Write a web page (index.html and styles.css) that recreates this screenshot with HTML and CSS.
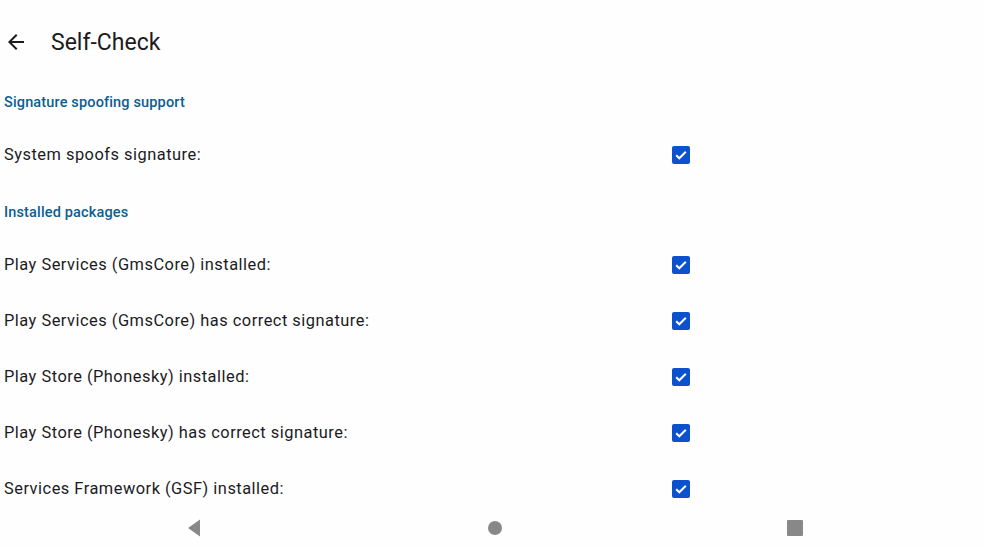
FILE: index.html
```html
<!DOCTYPE html>
<html lang="en">
<head>
<meta charset="utf-8">
<title>Self-Check</title>
<link rel="stylesheet" href="styles.css">
</head>
<body>
<div class="screen">
  <header class="topbar">
    <span class="back-icon">
      <svg width="24" height="24" viewBox="0 0 24 24"><path d="M20 11H7.83l5.59-5.59L12 4l-8 8 8 8 1.41-1.41L7.83 13H20v-2z" fill="#1c1b1f"/></svg>
    </span>
    <h1 class="title">Self-Check</h1>
  </header>

  <section class="section">
    <h2 class="section-title">Signature spoofing support</h2>
    <div class="row"><span class="label">System spoofs signature:</span><span class="checkbox"><svg width="18" height="18" viewBox="0 0 18 18"><path d="M4.2 9.2l3.1 3.1 6.5-6.5" fill="none" stroke="#fff" stroke-width="2"/></svg></span></div>
  </section>

  <section class="section">
    <h2 class="section-title">Installed packages</h2>
    <div class="row"><span class="label">Play Services (GmsCore) installed:</span><span class="checkbox"><svg width="18" height="18" viewBox="0 0 18 18"><path d="M4.2 9.2l3.1 3.1 6.5-6.5" fill="none" stroke="#fff" stroke-width="2"/></svg></span></div>
    <div class="row"><span class="label">Play Services (GmsCore) has correct signature:</span><span class="checkbox"><svg width="18" height="18" viewBox="0 0 18 18"><path d="M4.2 9.2l3.1 3.1 6.5-6.5" fill="none" stroke="#fff" stroke-width="2"/></svg></span></div>
    <div class="row"><span class="label">Play Store (Phonesky) installed:</span><span class="checkbox"><svg width="18" height="18" viewBox="0 0 18 18"><path d="M4.2 9.2l3.1 3.1 6.5-6.5" fill="none" stroke="#fff" stroke-width="2"/></svg></span></div>
    <div class="row"><span class="label">Play Store (Phonesky) has correct signature:</span><span class="checkbox"><svg width="18" height="18" viewBox="0 0 18 18"><path d="M4.2 9.2l3.1 3.1 6.5-6.5" fill="none" stroke="#fff" stroke-width="2"/></svg></span></div>
    <div class="row"><span class="label">Services Framework (GSF) installed:</span><span class="checkbox"><svg width="18" height="18" viewBox="0 0 18 18"><path d="M4.2 9.2l3.1 3.1 6.5-6.5" fill="none" stroke="#fff" stroke-width="2"/></svg></span></div>
  </section>
</div>

<nav class="navbar">
  <span class="nav-back"><svg width="14" height="18" viewBox="0 0 14 18"><path d="M13 0.5V17.5L1 9z" fill="#888"/></svg></span>
  <span class="nav-home"></span>
  <span class="nav-recents"></span>
</nav>
</body>
</html>
```

FILE: styles.css
```css
* { box-sizing: border-box; }

html, body {
  margin: 0;
  padding: 0;
  background: #fefefe;
  width: 984px;
  height: 549px;
  overflow: hidden;
  font-family: Roboto, "Noto Sans", "Liberation Sans", sans-serif;
  color: #1b1b1f;
}

.screen {
  display: flex;
  flex-direction: column;
}

.topbar {
  height: 73px;
  padding-top: 12px;
  display: flex;
  align-items: center;
}

.back-icon {
  display: flex;
  width: 24px;
  height: 24px;
  margin-left: 4px;
  margin-top: -1px;
}

.title {
  margin: 0 0 0 23px;
  font-size: 23px;
  font-weight: 400;
  color: #1c1b1f;
  line-height: 28px;
}

.section {
  display: flex;
  flex-direction: column;
}

.section-title {
  margin: 0;
  padding: 20px 0 14px 4px;
  font-size: 14.5px;
  line-height: 20px;
  letter-spacing: 0.15px;
  font-weight: 500;
  color: #0c5f93;
}

.row {
  height: 56px;
  width: 690px;
  padding-left: 4px;
  display: flex;
  align-items: center;
  justify-content: space-between;
}

.label {
  font-size: 16.4px;
  line-height: 24px;
  letter-spacing: 0.5px;
  color: #1b1b1f;
}

.checkbox {
  width: 18px;
  height: 18px;
  border-radius: 2px;
  background: #0b52cc;
  display: flex;
}

.navbar {
  position: fixed;
  left: 0;
  bottom: 0;
  width: 984px;
  height: 42px;
  display: flex;
  align-items: center;
  background: transparent;
}

.nav-back {
  display: flex;
  margin-left: 187px;
}

.nav-home {
  width: 14px;
  height: 14px;
  border-radius: 50%;
  background: #888;
  margin-left: 287px;
}

.nav-recents {
  width: 16px;
  height: 16px;
  border-radius: 1px;
  background: #888;
  margin-left: 285px;
}
```
